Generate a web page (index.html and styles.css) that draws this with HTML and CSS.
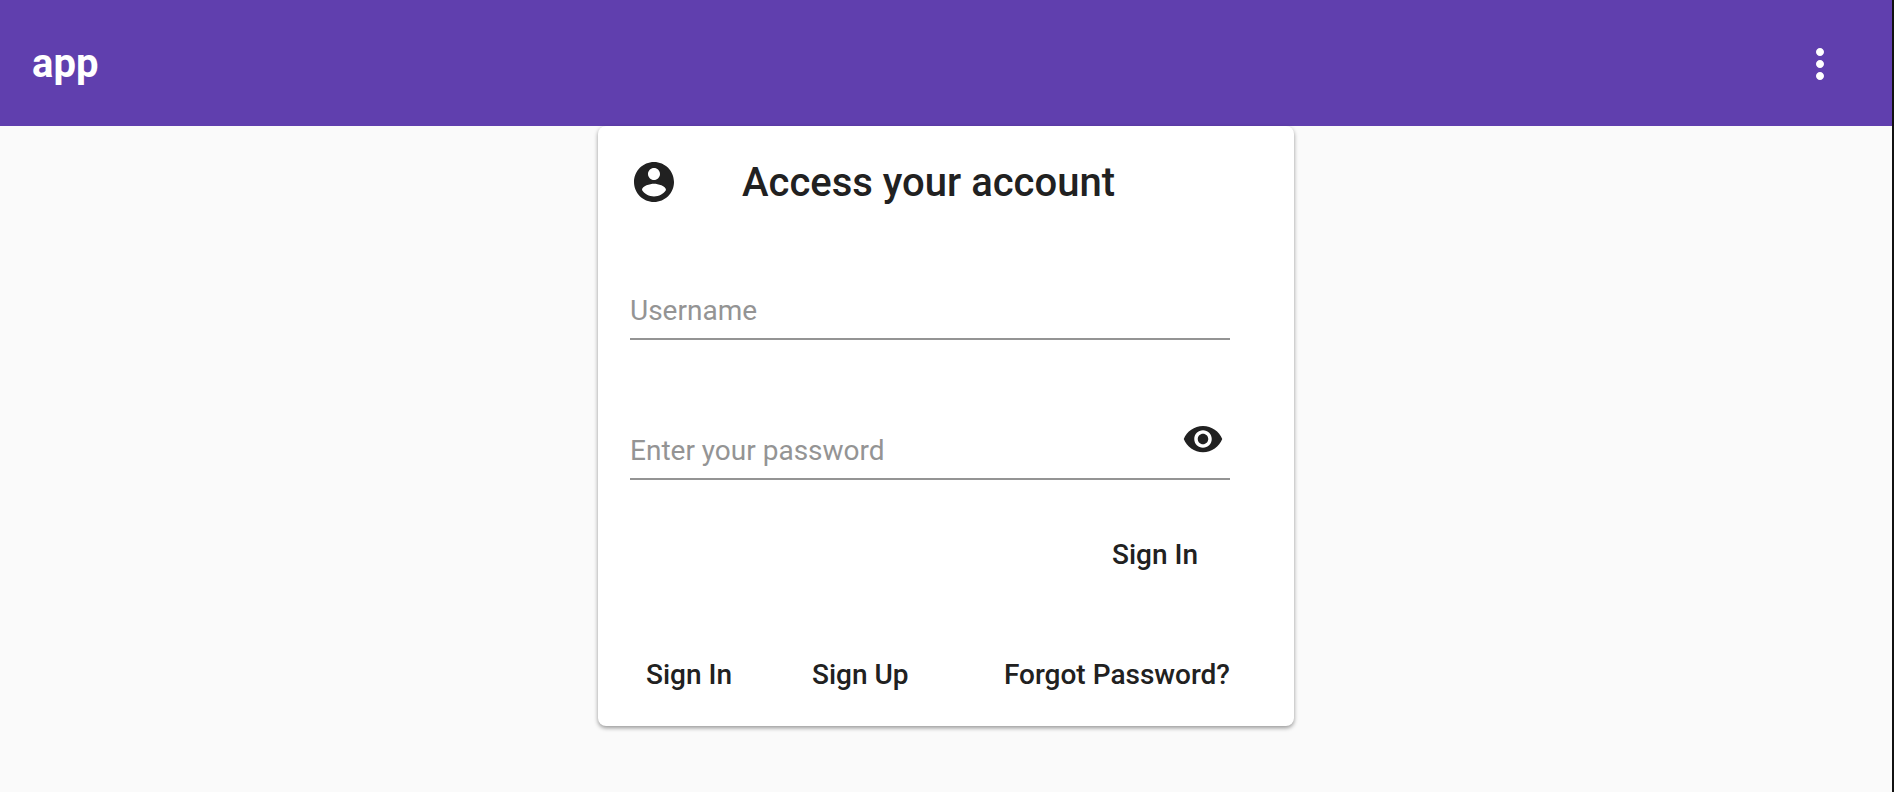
FILE: index.html
```html
<!DOCTYPE html>
<html lang="en">
<head>
<meta charset="utf-8">
<meta name="viewport" content="width=device-width, initial-scale=1">
<title>app</title>
<link rel="stylesheet" href="styles.css">
</head>
<body class="page">
<header class="toolbar">
  <h1 class="brand">app</h1>
  <button class="icon-button" type="button" aria-label="More options">
    <svg class="icon" viewBox="0 0 24 24" aria-hidden="true"><path d="M12 8c1.1 0 2-.9 2-2s-.9-2-2-2-2 .9-2 2 .9 2 2 2zm0 2c-1.1 0-2 .9-2 2s.9 2 2 2 2-.9 2-2-.9-2-2-2zm0 6c-1.1 0-2 .9-2 2s.9 2 2 2 2-.9 2-2-.9-2-2-2z"/></svg>
  </button>
</header>
<main class="card">
  <div class="card-header">
    <svg class="icon" viewBox="0 0 24 24" aria-hidden="true"><path d="M12 2C6.48 2 2 6.48 2 12s4.48 10 10 10 10-4.480 10-10S17.520 2 12 2zm0 3c1.660 0 3 1.340 3 3s-1.340 3-3 3-3-1.340-3-3 1.340-3 3-3zm0 14.200c-2.500 0-4.710-1.280-6-3.220.03-1.990 4-3.080 6-3.080 1.990 0 5.970 1.090 6 3.080-1.290 1.940-3.500 3.220-6 3.220z"/></svg>
    <h2 class="card-title">Access your account</h2>
  </div>
  <form class="form">
    <div class="field">
      <input class="field-input" type="text" placeholder="Username" aria-label="Username">
    </div>
    <div class="field">
      <input class="field-input" type="password" placeholder="Enter your password" aria-label="Enter your password">
      <button class="icon-button" type="button" aria-label="Show password">
        <svg class="icon icon-eye" viewBox="0 0 24 24" aria-hidden="true"><path d="M12 4.500C7 4.500 2.730 7.610 1 12c1.730 4.390 6 7.500 11 7.500s9.270-3.110 11-7.500c-1.730-4.390-6-7.500-11-7.500zM12 17c-2.760 0-5-2.240-5-5s2.240-5 5-5 5 2.240 5 5-2.240 5-5 5zm0-8c-1.660 0-3 1.340-3 3s1.340 3 3 3 3-1.340 3-3-1.340-3-3-3z"/></svg>
      </button>
    </div>
    <button class="text-button submit" type="submit">Sign In</button>
  </form>
  <nav class="links">
    <button class="text-button" type="button">Sign In</button>
    <button class="text-button" type="button">Sign Up</button>
    <button class="text-button last" type="button">Forgot Password?</button>
  </nav>
</main>
</body>
</html>
```
FILE: styles.css
```css
* {
  box-sizing: border-box;
}

.page {
  margin: 0;
  min-height: 100vh;
  background: #fafafa;
  border-right: 2px solid #111;
  color: #212121;
  font-family: Roboto, sans-serif;
}

.toolbar {
  display: flex;
  align-items: center;
  justify-content: space-between;
  padding: 40px 48px 38px 32px;
  background: #603fae;
  color: #fff;
}

.brand {
  margin: 0;
  font-size: 40px;
  line-height: 48px;
  font-weight: 700;
}

.icon {
  display: block;
  width: 48px;
  height: 48px;
  fill: currentColor;
}

.icon-eye {
  width: 42px;
  height: 42px;
}

.icon-button {
  padding: 0;
  border: 0;
  background: none;
  color: inherit;
  cursor: pointer;
}

.card {
  width: 100%;
  max-width: 696px;
  margin: 0 auto;
  padding: 32px 64px 35px 32px;
  border-radius: 8px;
  background: #fff;
  box-shadow: 0 2px 4px rgba(0, 0, 0, 0.4);
}

.card-header {
  display: flex;
  align-items: flex-start;
  gap: 64px;
}

.card-title {
  margin: 0;
  font-size: 40px;
  line-height: 50px;
  font-weight: 500;
}

.form {
  display: flex;
  flex-direction: column;
  padding-top: 52px;
}

.field {
  display: flex;
  align-items: flex-start;
  height: 80px;
  padding-right: 6px;
  border-bottom: 2px solid #949494;
}

.field + .field {
  margin-top: 60px;
}

.field-input {
  flex: 1;
  min-width: 0;
  height: 34px;
  margin-top: 34px;
  padding: 0;
  border: 0;
  outline: 0;
  background: none;
  color: inherit;
  font: 400 28px/34px Roboto, sans-serif;
}

.field-input::placeholder {
  color: #949494;
  opacity: 1;
}

.field .icon-button {
  margin-top: 18px;
}

.text-button {
  padding: 0;
  border: 0;
  background: none;
  color: inherit;
  font: 500 28px/32px Roboto, sans-serif;
  cursor: pointer;
}

.submit {
  align-self: flex-end;
  margin-top: 59px;
  margin-right: 32px;
}

.links {
  display: flex;
  gap: 80px;
  padding: 88px 0 0 16px;
}

.last {
  margin-left: auto;
}
```
